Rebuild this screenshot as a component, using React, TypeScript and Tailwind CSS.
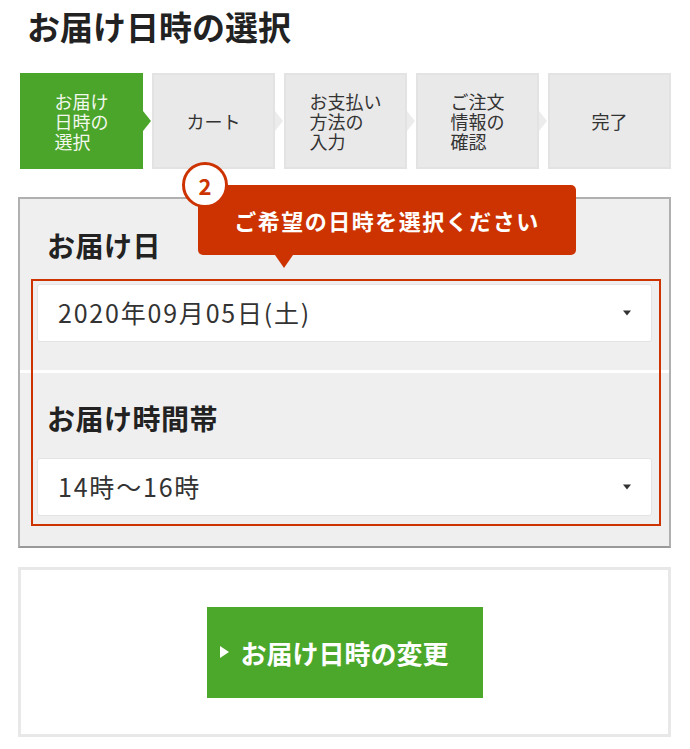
import type { ReactNode } from 'react';

const FONT = { fontFamily: '"Noto Sans CJK JP", "Noto Sans", sans-serif' };

type Step = { text: string; active?: boolean };

const STEPS: Step[] = [
    { text: 'お届け\n日時の\n選択', active: true },
    { text: 'カート' },
    { text: 'お支払い\n方法の\n入力' },
    { text: 'ご注文\n情報の\n確認' },
    { text: '完了' },
];

function StepBox({ step, last }: { step: Step; last: boolean }) {
    return (
        <div
            className={`relative flex items-center justify-center h-[96px] ${
                step.active ? 'bg-[#4ba52a] text-[#f2f8ee]' : 'bg-[#e9e9e9] border-2 border-[#e3e3e3] text-[#333]'
            }`}
        >
            <p className="text-[18px] leading-[20px] text-left whitespace-pre-line">{step.text}</p>
            {/* chevron into the gap */}
            {!last && (
                <div
                    className={`absolute top-1/2 -translate-y-1/2 w-0 h-0 border-y-[10px] border-y-transparent border-l-[8px] ${
                        step.active ? '-right-[8px] border-l-[#4ba52a]' : '-right-[10px] border-l-[#ececec]'
                    }`}
                />
            )}
        </div>
    );
}

function SelectBox({ children }: { children: ReactNode }) {
    return (
        <div className="relative flex items-center h-[58px] bg-white border border-[#e4e4e4] rounded-[3px] pl-[20px] text-[25px] tracking-[1.8px] text-[#333]">
            {children}
            <div className="absolute right-[20px] top-1/2 -translate-y-1/2 w-0 h-0 border-x-[4px] border-x-transparent border-t-[5px] border-t-[#333]" />
        </div>
    );
}

function Field({ label, value, pt, gap }: { label: string; value: string; pt: string; gap: string }) {
    return (
        <div className={`px-[17px] ${pt} flex flex-col ${gap}`}>
            <div className="text-[28px] leading-[36px] font-bold text-[#222] pl-[10px] tracking-[0.5px]">{label}</div>
            <SelectBox>{value}</SelectBox>
        </div>
    );
}

export default function App() {
    return (
        <div className="relative w-[690px] h-[749px] bg-white overflow-hidden" style={FONT}>
            <div className="flex flex-col pl-[18px] w-[671px]">
                {/* Title */}
                <h1 className="pt-[6px] pl-[9px] text-[33px] leading-[40px] font-bold text-[#222]">お届け日時の選択</h1>

                {/* Steps */}
                <div className="mt-[27px] ml-[2px] grid grid-cols-5 gap-[9px]">
                    {STEPS.map((s, i) => (
                        <StepBox key={i} step={s} last={i === STEPS.length - 1} />
                    ))}
                </div>

                {/* Form panel */}
                <div className="relative mt-[28px] h-[351px] bg-[#efefef] border-2 border-[#b0b0b0] border-b-[#999]">
                    <Field label="お届け日" value="2020年09月05日(土)" pt="pt-[28px] pb-[28px]" gap="gap-[21px]" />
                    <div className="h-[3px] bg-white" />
                    <Field label="お届け時間帯" value="14時〜16時" pt="pt-[27px]" gap="gap-[22px]" />
                    {/* highlight frame */}
                    <div className="absolute left-[11px] top-[80px] w-[630px] h-[247px] border-2 border-[#cc3300] pointer-events-none" />
                </div>

                {/* Action panel */}
                <div className="mt-[19px] h-[170px] bg-white border-[3px] border-[#e8e8e8] flex items-center justify-center">
                    <button className="w-[276px] h-[91px] bg-[#4ca82b] text-white font-bold text-[26px] flex items-center justify-start pl-[13px] gap-[12px]">
                        <span className="w-0 h-0 border-y-[6px] border-y-transparent border-l-[9px] border-l-white" />
                        お届け日時の変更
                    </button>
                </div>
            </div>

            {/* Tooltip */}
            <div className="absolute left-[198px] top-[185px] w-[378px] h-[70px] bg-[#cc3300] rounded-[5px] flex items-center justify-center text-white font-bold text-[22px] tracking-[1.5px]">
                ご希望の日時を選択ください
                <div className="absolute left-[77px] -bottom-[13px] w-0 h-0 border-x-[9px] border-x-transparent border-t-[13px] border-t-[#cc3300]" />
            </div>
            <div className="absolute left-[182px] top-[162px] w-[46px] h-[46px] rounded-full bg-white border-[3px] border-[#cc3300] flex items-center justify-center text-[#cc3300] font-bold text-[22px] leading-none">
                2
            </div>
        </div>
    );
}
